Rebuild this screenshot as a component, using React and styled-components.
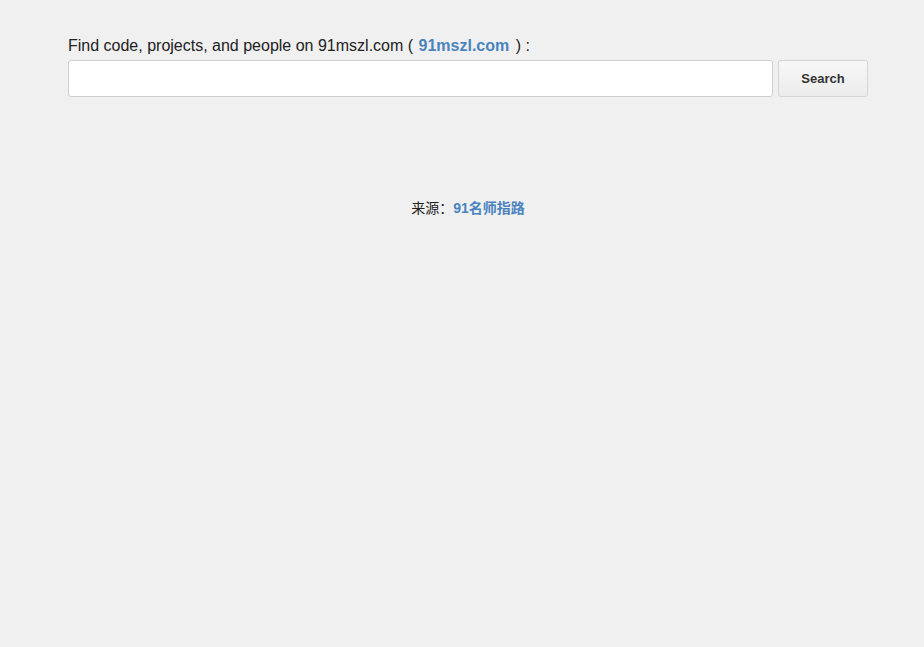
import React from "react";
import styled, { createGlobalStyle } from "styled-components";

const Global = createGlobalStyle`
  html, body { margin: 0; padding: 0; background: #f0f0f0; }
  body { font-family: "Liberation Sans", Arial, sans-serif; color: #222; }
`;

const Page = styled.div`
  min-height: 647px;
  background: #f0f0f0;
  padding: 37px 56px 0 68px;
  box-sizing: border-box;
`;

const Container = styled.div`
  width: 800px;
`;

const Label = styled.label`
  display: block;
  font-size: 16px;
  line-height: 18px;
  color: #222;
  margin-bottom: 5px;
`;

const Link = styled.a`
  color: #4a83bd;
  font-weight: bold;
  text-decoration: none;
  padding: ${(p) => p.$pad || "0"};
`;

const Row = styled.form`
  display: flex;
  gap: 5px;
  height: 37px;
`;

const Input = styled.input`
  flex: 1;
  height: 37px;
  box-sizing: border-box;
  border: 1px solid #cfcfcf;
  border-radius: 3px;
  background: #fff;
  padding: 0 8px;
  font-family: inherit;
  font-size: 14px;
  outline: none;
`;

const Button = styled.button`
  width: 90px;
  height: 37px;
  box-sizing: border-box;
  border: 1px solid #d4d4d4;
  border-radius: 3px;
  background: linear-gradient(#f7f7f7, #ececec);
  font-family: "Liberation Sans", Arial, sans-serif;
  font-weight: bold;
  font-size: 13px;
  color: #333;
  cursor: pointer;
  padding: 0;
`;

const Footer = styled.div`
  margin-top: 100px;
  text-align: center;
  font-size: 14px;
  color: #222;
  font-family: "Liberation Sans", "Noto Sans CJK SC", sans-serif;
`;

export default function App() {
  return (
    <>
      <Global />
      <Page>
        <Container>
          <Label>
            Find code, projects, and people on 91mszl.com ( <Link href="#" $pad="0 2px 0 1px">91mszl.com</Link> ) :
          </Label>
          <Row onSubmit={(e) => e.preventDefault()}>
            <Input type="text" />
            <Button type="submit">Search</Button>
          </Row>
          <Footer>
            来源：<Link href="#">91名师指路</Link>
          </Footer>
        </Container>
      </Page>
    </>
  );
}
